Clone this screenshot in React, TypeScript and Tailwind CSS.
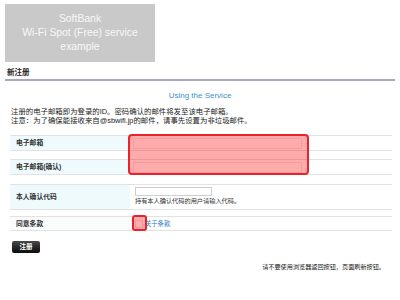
import React from "react";

const rows = [
    { label: "电子邮箱", kind: "mail" },
    { label: "电子邮箱(确认)", kind: "mail" },
];

export default function App() {
    return (
        <div className="w-[400px] h-[300px] bg-white overflow-hidden text-[#222] font-['Liberation_Sans','Noto_Sans_CJK_SC',sans-serif]">
            <div className="pt-[4px] pl-[5px]">
                <div className="w-[150px] h-[58px] bg-[#c9c9c9] flex flex-col items-center justify-center text-[#f8f8f8] text-[10.4px] leading-[14px]">
                    <span>SoftBank</span>
                    <span>Wi-Fi Spot (Free) service</span>
                    <span>example</span>
                </div>
            </div>

            <div className="mx-[5px] mt-[5px] h-[14px] border-b-2 border-[#a6a9ba] pl-[2px] text-[7.5px] leading-[12px] font-bold">
                新注册
            </div>

            <p className="mt-[11px] text-center text-[8px] leading-[8px] text-[#3d8fcc]">Using the Service</p>

            <div className="mt-[8px] pl-[11px] text-[7.4px] leading-[8.5px]">
                <p>注册的电子邮箱即为登录的ID。密码确认的邮件将发至该电子邮箱。</p>
                <p>注意：为了确保能接收来自@sbwifi.jp的邮件，请事先设置为非垃圾邮件。</p>
            </div>

            <div className="ml-[10px] mr-[8px] mt-[10px]">
                <div className="relative">
                    {rows.map((row, i) => (
                        <div key={row.label} className={`flex h-[16px] border-y border-[#e2e2e2] ${i > 0 ? "mt-[8px]" : ""}`}>
                            <div className="w-[120px] bg-[#eefafc] pl-[6px] text-[6.8px] leading-[14px] font-bold text-[#333]">{row.label}</div>
                            <div className="flex-1 flex items-center pl-[3px]">
                                <div className="w-[169px] h-[11px] border border-[#ececec] bg-white" />
                            </div>
                        </div>
                    ))}
                    <div className="absolute left-[118px] top-[-1px] w-[181px] h-[41px] rounded-[4px] border-2 border-[#e8232e] bg-[rgba(255,0,0,0.33)]" />
                </div>

                <div className="flex h-[26px] mt-[9px] border-y border-[#e2e2e2]">
                    <div className="w-[120px] bg-[#eefafc] pl-[6px] text-[6.8px] leading-[24px] font-bold text-[#333]">本人确认代码</div>
                    <div className="flex-1 pl-[5px] pt-[2px]">
                        <div className="w-[77px] h-[9px] border border-[#cfcfcf] bg-white" />
                        <p className="mt-[1px] text-[6.2px] leading-[8px] text-[#333]">持有本人确认代码的用户请输入代码。</p>
                    </div>
                </div>

                <div className="flex h-[15px] mt-[6px] border-y border-[#e2e2e2]">
                    <div className="w-[120px] bg-[#fafcfc] pl-[6px] text-[6.8px] leading-[13px] font-bold text-[#333]">同意条款</div>
                    <div className="flex-1 flex items-center pl-[5px] relative">
                        <div className="w-[8px] h-[8px] border border-[#e6e6e6] bg-white" />
                        <span className="ml-[2px] text-[6.3px] leading-[8px] text-[#2f7fc0]">关于条款</span>
                        <div className="absolute left-[2px] top-[-2px] w-[15px] h-[16px] rounded-[3px] border-2 border-[#e8232e] bg-[rgba(255,0,0,0.33)]" />
                    </div>
                </div>
            </div>

            <div className="flex pl-[12px] mt-[10px]">
                <button className="w-[28px] h-[12px] rounded-[2px] bg-gradient-to-b from-[#4a4a4a] to-[#0c0c0c] text-white text-[6.5px] leading-[12px] font-bold">注册</button>
            </div>

            <p className="mt-[10px] pr-[15px] text-right text-[6.15px] leading-[8px] text-[#222]">请不要使用浏览器返回按钮，页面刷新按钮。</p>
        </div>
    );
}
